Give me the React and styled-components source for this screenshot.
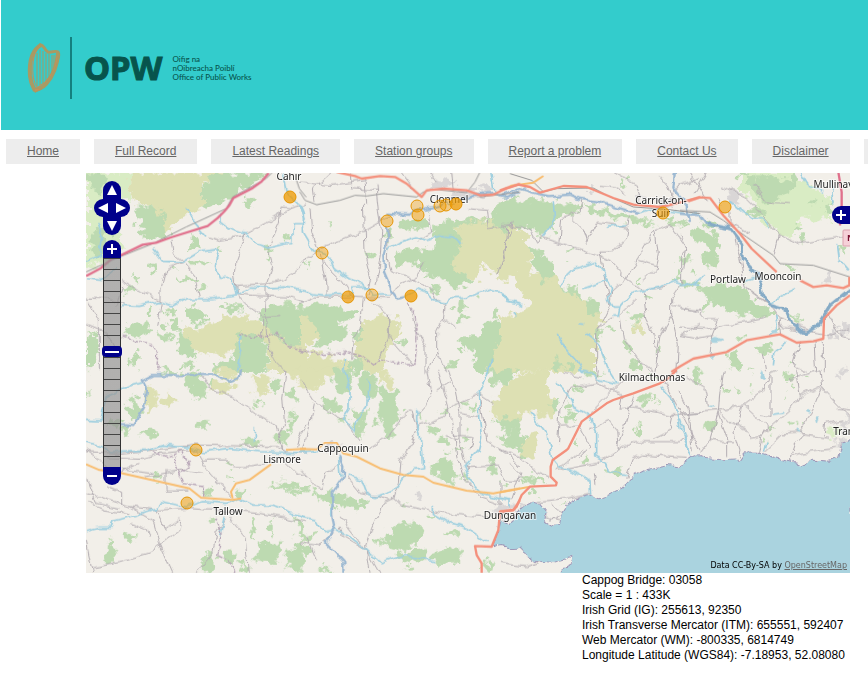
import React, { useState } from 'react';
import styled, { createGlobalStyle } from 'styled-components';

const COLORS = {
  BRAND: '#33cccc',
  BRAND_DARK: '#07544c',
  CONTROL: '#00008b',
  LAND: '#f2efe9',
  SEA: '#aad3df',
  WOOD: '#bddab1',
  HEATH: '#dde0b3',
  SCRUB: '#d9ecc4',
  TOWN: '#d9d6d6',
};

const NAV_ITEMS = [
  'Home',
  'Full Record',
  'Latest Readings',
  'Station groups',
  'Report a problem',
  'Contact Us',
  'Disclaimer',
  'FAQ',
];

const DETAILS = [
  'Cappog Bridge: 03058',
  'Scale = 1 : 433K',
  'Irish Grid (IG): 255613, 92350',
  'Irish Transverse Mercator (ITM): 655551, 592407',
  'Web Mercator (WM): -800335, 6814749',
  'Longitude Latitude (WGS84): -7.18953, 52.08080',
];

const PLACES = [
  { name: 'Cahir', x: 203, y: 7 },
  { name: 'Clonmel', x: 363, y: 30 },
  { name: 'Carrick-on-', x: 575, y: 31 },
  { name: 'Suir', x: 575, y: 44 },
  { name: 'Mullinavat', x: 752, y: 15 },
  { name: 'Portlaw', x: 642, y: 110 },
  { name: 'Mooncoin', x: 692, y: 107 },
  { name: 'Kilmacthomas', x: 566, y: 208 },
  { name: 'Tramore', x: 767, y: 262 },
  { name: 'Lismore', x: 196, y: 290 },
  { name: 'Cappoquin', x: 257, y: 279 },
  { name: 'Tallow', x: 142, y: 342 },
  { name: 'Dungarvan', x: 424, y: 346 },
];

// [x, y, opacity]
const STATIONS = [
  [204, 24, 0.75],
  [236, 80, 0.45],
  [301, 48, 0.45],
  [331, 33, 0.35],
  [332, 42, 0.5],
  [354, 33, 0.4],
  [360, 32, 0.45],
  [370, 31, 0.75],
  [262, 124, 0.7],
  [286, 122, 0.4],
  [325, 123, 0.75],
  [577, 40, 0.6],
  [639, 34, 0.6],
  [110, 277, 0.5],
  [101, 330, 0.5],
];

// Each sheet is drawn at three times the display scale. Areas are paths,
// `woods`, `lakes` and `towns` are small patches given as [x, y, rx, ry].
const SHEETS = [
  {
    x: 0,
    y: -3,
    scrub: 'M0,0 L130,0 L130,70 L100,160 L110,230 L60,270 L0,290z',
    heath:
      'M130,0 L415,0 L400,15 L345,35 L350,110 L290,130 L235,185 L200,100 L150,100 L130,60z M280,460 L340,470 L400,440 L460,430 L520,440 L530,460 L660,430 L660,600 L545,600 L545,510 L400,550 L330,540 L290,500z',
    wood:
      'M0,10 L40,5 L60,30 L40,60 L20,50z M20,180 L60,160 L80,230 L40,260 L10,220z M415,0 L545,0 L500,35 L440,75 L400,95 L350,110 L345,40z M155,105 L210,100 L235,150 L240,195 L190,205 L175,160 L145,150z M300,410 L330,400 L362,420 L365,450 L330,460 L300,440z M460,490 L540,490 L545,600 L380,600 L400,570 L440,560z M550,400 L590,395 L660,400 L660,510 L600,520 L560,480 L510,430z M270,470 L310,500 L330,560 L280,540z M0,490 L30,480 L40,540 L20,590 L0,590z M110,460 L150,450 L190,480 L150,500 L110,480z',
    woods: [
      [327, 215, 18, 22], [490, 88, 18, 14], [202, 290, 10, 20], [150, 318, 11, 9],
      [130, 352, 20, 10], [340, 270, 32, 8], [310, 322, 38, 7], [400, 235, 10, 6],
      [605, 195, 14, 8], [180, 182, 18, 12], [410, 405, 12, 10], [450, 410, 26, 10],
      [270, 455, 12, 20], [235, 495, 22, 10], [145, 560, 10, 22], [180, 468, 22, 14],
      [310, 580, 14, 12], [250, 420, 12, 8], [345, 350, 14, 6], [548, 240, 8, 14],
      [265, 290, 12, 4], [190, 415, 5, 14], [240, 460, 8, 9], [130, 580, 8, 12],
    ],
    stream:
      'M405,130 L405,150 L430,170 L478,185 L510,215 L545,228 L600,215 L620,215 L622,155 L650,155 M200,230 L230,268 L290,270 L340,240 L395,232 L385,280 L400,318 L440,320 L450,365 L500,345 L540,348 L590,345 L630,350 L660,360 M105,400 L160,403 L220,388 L260,402 L300,380 L380,380 L450,368 M300,110 L320,145 L360,190 M35,150 L50,190 L40,250 L0,270 M0,320 L50,325 L90,290 M590,0 L600,60 L640,100 L655,140 M460,485 L465,530 L452,600',
    rail:
      'M0,300 L100,255 L200,215 L300,165 L420,110 L440,75 L540,20 L560,0 M630,20 L640,50 L660,75',
    minor:
      'M370,195 L400,205 L470,195 L480,185 L545,150 L615,108 L660,95 M478,185 L450,260 L445,300 L452,365 M615,108 L585,105 L580,150 L545,228 L560,280 L540,340 L540,390 M255,200 L260,240 L290,265 L325,310 L340,375 M290,270 L240,290 L225,350 L225,400 L215,460 M105,325 L150,350 L225,385 M452,365 L500,370 L600,375 L660,390 M455,370 L480,400 L530,435 L580,430 M540,390 L545,500 L560,560 L600,600 M0,378 L60,380 L110,395 M10,390 L40,450 L40,600 M450,340 L540,335 L600,320 L640,290 L660,260 M530,440 L530,500 M110,340 L95,400 M0,455 L60,480 L100,560',
    border:
      'M460,485 L510,500 L570,480 L610,530 L660,535 M110,495 L200,520 L218,545 L215,600',
    motorway:
      'M0,312 L45,288 L75,262 L110,247 L170,218 L210,212 L255,196 L365,162 L395,138 L415,118 L430,100 L442,78 L500,48 L525,30 L548,3',
  },
  {
    x: 642,
    y: -3,
    heath:
      'M470,150 L540,145 L640,160 L660,170 L660,300 L600,320 L560,270 L530,325 L450,290 L450,260 L480,230z M0,430 L40,440 L60,500 L0,520z M190,440 L240,430 L305,440 L300,480 L260,540 L240,600 L160,600 L165,530z M0,550 L60,545 L150,570 L150,600 L0,600z M590,460 L660,430 L660,600 L560,600z',
    wood:
      'M320,140 L380,135 L390,160 L330,178 L300,155z M400,180 L430,150 L500,140 L560,150 L600,85 L660,85 L660,160 L520,150 L470,165 L490,210 L450,280 L530,330 L460,350 L430,320 L370,295 L350,270 L290,280 L285,255 L290,240 L360,230 L400,235z M0,400 L60,395 L165,420 L165,440 L120,450 L150,480 L80,530 L40,520 L60,500 L30,440 L0,430z M550,450 L590,440 L610,470 L560,600 L530,600 L520,540 L470,510 L480,490 L540,490z M150,560 L190,565 L200,600 L150,600z M560,140 L600,130 L660,160 L600,180z',
    woods: [
      [485, 405, 14, 16], [487, 440, 18, 12], [90, 162, 6, 6], [25, 275, 5, 10],
      [265, 190, 10, 8], [210, 250, 10, 8], [390, 310, 12, 8], [175, 490, 14, 22],
      [305, 510, 14, 10], [455, 410, 6, 5], [590, 425, 12, 10], [460, 580, 14, 8],
      [485, 525, 8, 14], [535, 370, 6, 6], [410, 350, 12, 8], [300, 150, 12, 8],
    ],
    towns: [[430, 35, 30, 14], [530, 65, 30, 12], [560, 45, 20, 10], [480, 70, 30, 14]],
    river:
      'M262,125 L330,128 L345,115 L400,105 L470,90 L520,70 L590,65 L620,75 L660,60 M258,160 L262,205 L250,250 L252,300 L265,330 L275,360 L290,380 L310,375',
    stream:
      'M0,95 L10,120 L10,180 L40,230 L85,250 L105,290 L150,320 L205,345 L215,370 L270,368 M0,355 L40,365 L75,370 L160,365 L155,345 L205,345 M262,232 L300,210 L350,195 L380,205 L420,190 L460,195 L480,215 M310,375 L350,350 L375,360 L400,385 L435,395 L450,380 L500,378 L570,350 L600,355 L625,390 L660,400 M575,560 L565,600 M130,600 L140,560 M575,0 L585,60',
    rail:
      'M0,60 L15,85 L50,98 L120,85 L165,70 L200,72 L250,65 L350,75 L370,60 L400,52 L500,62 L525,30 L540,0 M540,75 L660,60',
    minor:
      'M95,0 L40,50 L45,90 M150,0 L155,50 L230,55 M195,20 L200,95 M228,40 L235,120 L245,180 L240,260 L225,340 M0,270 L60,230 L185,180 L245,145 L270,135 M30,110 L35,180 L60,240 L78,340 L78,370 M70,270 L120,320 L160,375 M190,95 L195,240 L215,320 L200,370 M265,170 L262,260 L270,295 L360,330 L400,360 L410,385 L435,400 M0,395 L50,375 L150,375 L270,380 M190,380 L180,470 L160,500 L155,560 M220,390 L265,430 L265,500 L235,560 M435,400 L430,440 L410,480 L410,540 L385,600 M325,390 L350,480 L375,520 L375,600 M500,110 L560,115 L565,170 L640,160 M590,310 L600,280 L620,200 L640,150 M370,270 L350,310 L300,340 M385,130 L395,180 L350,210 M300,345 L270,370 M410,540 L440,600 M430,440 L470,465 M300,0 L340,50 M410,30 L390,0 M455,0 L460,60 M265,430 L270,500 L340,580 M0,30 L90,40 L200,25',
    border:
      'M0,535 L60,545 L130,540 L180,550 L225,585 L240,560 L300,575 L345,580 L352,480 L345,430 L325,395',
    primary:
      'M110,0 L165,12 L185,20 L240,12 L285,15 L320,35 L365,75 L380,55 L430,50 L500,55 L540,70 L580,68 L620,48 L660,35',
  },
  {
    x: 1242,
    y: -3,
    heath:
      'M0,200 L20,165 L75,185 L90,240 L95,300 L160,320 L180,345 L270,390 L310,440 L285,500 L285,600 L0,600 L0,440 L95,405 L60,360 L45,300 L0,330z',
    wood:
      'M0,100 L40,80 L160,85 L240,100 L240,120 L175,140 L160,170 L130,195 L90,165 L0,155z M85,230 L120,235 L165,280 L165,320 L130,330 L105,290z M245,90 L320,115 L380,130 L470,150 L420,160 L370,145 L290,130z M175,345 L230,345 L245,380z M255,380 L290,390 L300,430 L270,430z M500,140 L570,150 L560,160 L500,155z',
    woods: [
      [585, 180, 16, 14], [553, 262, 16, 8], [580, 297, 10, 8], [410, 438, 28, 13],
      [388, 523, 11, 12], [332, 465, 12, 6], [300, 485, 12, 14], [405, 585, 12, 14],
      [450, 378, 12, 6], [205, 238, 9, 5], [415, 322, 5, 12], [175, 575, 14, 16],
      [480, 535, 6, 5], [205, 585, 12, 9], [535, 315, 12, 8], [585, 340, 22, 8],
      [370, 30, 6, 7], [310, 560, 5, 5], [200, 265, 5, 3], [490, 135, 14, 8],
    ],
    heaths: [[418, 472, 14, 20]],
    towns: [[268, 60, 10, 8], [500, 95, 20, 14], [420, 80, 14, 10]],
    river:
      'M0,68 L60,50 L110,65 L150,72 L210,68 L240,80 L300,90 L380,115 L420,125 M525,0 L520,50 L560,100 L570,150',
    stream:
      'M420,125 L460,110 L560,125 L600,125 M175,345 L195,320 L225,290 L285,270 L310,300 L320,325 L250,350 M320,320 L335,350 L325,380 L340,405 L360,405 L395,365 L430,355 L480,345 L525,328 L550,335 L600,340 M360,405 L355,432 L340,432 M175,485 L190,520 L235,570 L250,600 M255,485 L295,515 L310,550 L328,600 M0,360 L20,390 L70,402 M160,90 L165,150 L130,195 M235,458 L250,460 M35,420 L50,435 M320,165 L380,158',
    rail:
      'M30,5 L95,25 L130,60 L170,50 L280,48 L330,75 L400,105 L500,112 L600,125',
    minor:
      'M0,160 L90,170 L110,210 L125,195 L330,265 L380,320 L430,355 M20,165 L15,250 L0,275 M430,355 L500,345 M465,175 L400,280 L380,320 L335,360 L330,400 L290,480 L290,600 M465,175 L510,160 L560,230 L545,260 L545,335 L515,380 L515,430 L480,490 L465,600 M245,85 L240,120 L185,140 L180,210 M215,135 L250,170 L265,215 M260,215 L295,150 L385,165 L380,195 L340,240 L300,240 L310,300 L330,400 M430,360 L440,440 L465,490 L470,560 M410,380 L360,430 L370,500 L420,570 L460,600 M465,180 L475,240 L465,295 L430,330 M415,265 L465,280 M340,0 L410,40 L420,70 M475,10 L500,40 L520,90 M520,400 L600,420 M540,490 L600,460 M515,430 L535,520 L530,600 M290,470 L340,440 M600,20 L540,40 L500,90 M380,160 L385,130 M380,70 L345,45 L300,40',
    primary:
      'M0,55 L55,38 L90,45 L120,62 L190,42 L260,45 L340,78 L400,98 L480,105 L540,92 L600,75',
    secondary: 'M30,42 L100,32 L130,12',
  },
  {
    x: 1782,
    y: -3,
    scrub:
      'M180,0 L330,0 L400,50 L450,80 L450,150 L370,130 L330,200 L230,140 L230,90 L180,60z',
    wood:
      'M30,180 L50,165 L100,180 L120,210 L110,270 L80,290 L60,250 L85,240 L70,210 L40,210z M55,350 L100,335 L190,340 L220,390 L280,415 L270,440 L150,420 L80,370z M200,20 L240,10 L350,30 L330,60 L260,95 L220,60z',
    woods: [
      [370, 195, 13, 13], [232, 120, 28, 12], [355, 165, 12, 8], [160, 560, 18, 24],
      [250, 530, 22, 14], [325, 285, 16, 8], [95, 385, 18, 10], [190, 10, 14, 10],
      [400, 90, 18, 8], [75, 405, 8, 12], [350, 440, 18, 6], [490, 230, 10, 12],
      [180, 585, 10, 8], [90, 155, 20, 9], [20, 338, 16, 8], [345, 20, 14, 12],
      [440, 110, 10, 14], [335, 575, 5, 7], [180, 495, 14, 8], [285, 470, 8, 5],
    ],
    towns: [[160, 76, 22, 18], [445, 318, 11, 16], [497, 470, 18, 20], [460, 490, 14, 10]],
    lakes: [[108, 503, 16, 7], [95, 556, 9, 8], [285, 478, 12, 5]],
    estuary:
      'M80,155 L150,170 L185,215 L190,265 L235,310 L250,370 L270,400 L320,415 L340,460 L375,485 L410,465 L450,400 L510,352',
    river: 'M0,125 L60,130 L80,155 L150,172',
    stream:
      'M150,85 L180,110 L215,140 L250,140 L270,165 M360,0 L385,40 L430,60 M455,20 L462,100 M470,220 L475,260 L510,300 M0,340 L40,340 L75,310 M265,400 L290,380 L345,350 M290,430 L295,470 L270,490 M280,580 L285,540 L320,510 M200,325 L235,310',
    rail: 'M0,115 L90,120 L130,145 L200,195 L280,250 L300,275 L400,280 L510,315',
    minor:
      'M25,0 L60,50 L80,90 M45,60 L80,0 M130,45 L200,80 L240,120 L295,185 L280,250 M295,185 L360,215 L510,190 M0,190 L20,230 L10,300 M160,180 L180,260 L195,345 L260,390 M0,410 L60,415 L80,440 L115,440 M300,440 L400,480 M115,440 L95,490 L90,550 M0,465 L80,470 L260,435 M400,480 L460,490 L510,470 M200,350 L270,400 L300,440 L305,490 M430,500 L430,600 M360,510 L340,580 L380,600 M250,540 L260,600 M440,420 L480,490 L510,500 M300,465 L400,480 M405,510 L410,600 M0,490 L50,500 L100,490 M120,100 L110,80 M220,40 L260,90 L330,95 M150,120 L150,150 L210,185',
    motorway: 'M475,0 L485,60 L485,100 L480,160',
    primary:
      'M25,88 L60,76 L90,78 L130,130 L180,185 L215,230 L290,300 M360,325 L400,345 L440,340 L490,348 L508,340 L508,315 M-26,600 L0,583 L40,560 L140,540 L200,505 L300,487 L350,512 L400,508 L430,500 L432,440 L470,400 L510,370',
  },
  {
    x: 0,
    y: 591,
    heath:
      'M180,60 L205,50 L215,110 L190,130 L175,100z M225,90 L250,60 L265,90 L250,120z M375,35 L450,40 L430,65 L370,60z M505,10 L555,20 L545,80 L505,70z M600,0 L660,0 L660,60z M395,0 L465,0 L450,30 L400,20z',
    wood:
      'M130,90 L155,80 L165,130 L145,155 L128,130z M105,170 L130,165 L130,195 L105,195z M560,30 L580,20 L590,60 L560,70z M285,20 L340,0 L365,80 L330,85z M495,450 L510,450 L505,510 L495,500z M520,520 L590,520 L570,580 L510,570z M600,540 L640,530 L660,570 L650,609 L600,590z M610,130 L630,120 L625,160 L605,190z',
    woods: [
      [190, 190, 22, 12], [350, 165, 20, 13], [498, 215, 24, 12], [617, 70, 14, 18],
      [368, 365, 18, 14], [600, 347, 44, 10], [630, 368, 20, 8], [460, 368, 20, 9],
      [588, 205, 18, 20], [640, 470, 12, 20], [368, 582, 20, 28], [430, 560, 26, 16],
      [130, 500, 20, 9], [210, 322, 10, 8], [300, 25, 16, 9], [320, 45, 16, 7],
      [380, 450, 10, 12], [555, 475, 5, 24], [75, 545, 12, 34], [250, 5, 25, 8],
      [470, 595, 16, 12], [8, 75, 8, 10], [510, 100, 12, 8], [435, 285, 8, 5],
      [650, 525, 8, 16], [440, 328, 8, 4], [380, 35, 10, 6], [80, 155, 22, 14],
    ],
    river:
      'M105,165 L145,168 L175,110 L180,50 L170,30 L200,15 L380,15 L430,35 L460,25 L465,0',
    stream:
      'M0,148 L45,150 L60,80 L110,55 L170,38 M0,215 L50,230 L70,245 L180,240 L230,225 L310,235 L350,245 L430,235 L520,245 L660,248 M0,485 L40,475 L75,475 L80,455 L130,440 L215,415 L225,395 L300,410 L350,395 L420,400 L460,385 L500,405 L560,405 L620,430 L660,440 M505,170 L505,215 M415,440 L400,500',
    minor:
      'M0,245 L100,250 L200,240 L330,225 L575,230 L600,245 L660,250 M60,260 L170,265 L220,250 L330,240 M330,240 L365,300 L435,380 M350,270 L420,270 L440,290 L500,290 L560,280 M0,370 L50,385 L130,410 L220,420 L300,415 L400,422 L520,430 L660,455 M350,20 L380,60 L440,80 L510,130 L570,165 L590,240 M600,0 L590,80 L595,160 L580,190 L590,240 M100,310 L160,280 M240,300 L240,360 L310,360 M130,410 L200,450 L220,520 L260,609 M210,420 L240,480 L280,450 M100,575 L200,545 L240,510 L280,480 L285,445 M0,510 L20,609 M420,445 L390,490 L380,550 L330,609 M430,440 L480,500 L490,609 M660,160 L640,200 L635,235 M0,320 L30,400 L100,415 M60,350 L110,370 L110,410 M180,320 L290,300 L350,310 M110,300 L200,310 M600,280 L630,310 L660,320 M10,400 L50,420 L130,430 M100,575 L20,590 M130,460 L180,480 L190,500 M0,240 L40,270 L60,300',
    border:
      'M200,245 L240,260 L290,245 L310,290 L285,310 L265,290 L270,255 M280,310 L290,340 L350,350 L350,380 M385,440 L405,490 L395,560 L430,575 L450,609',
    secondary:
      'M0,283 L40,300 L100,308 L220,335 L310,355 L345,383 L440,390 L465,385 M440,385 L435,365 L450,340 L490,330 L555,283 M600,240 L660,236',
  },
  {
    x: 642,
    y: 591,
    heath:
      'M0,0 L110,0 L60,40 L50,70 L0,40z M240,0 L260,0 L290,60 L250,40z M570,110 L620,50 L660,20 L660,165 L580,135z',
    wood:
      'M240,50 L290,70 L300,130 L270,210 L230,160 L240,110z M170,20 L215,5 L240,50 L210,90 L180,60z M65,90 L110,80 L120,120 L80,130z M40,370 L90,365 L200,395 L190,415 L110,410 L60,390z M390,280 L440,260 L480,310 L450,340 L400,310z M260,490 L310,455 L370,470 L350,530 L290,545 L250,520z M290,550 L380,540 L370,570 L300,580z M390,560 L430,540 L480,535 L480,580 L400,580z M565,0 L640,0 L620,50 L580,40z M580,140 L660,150 L660,190 L600,180z M160,120 L200,120 L190,200 L170,210z M95,0 L160,0 L150,70 L110,60z',
    woods: [
      [400, 180, 16, 14], [430, 210, 10, 10], [445, 243, 14, 8], [20, 500, 26, 12],
      [15, 540, 20, 10], [580, 290, 12, 24], [607, 205, 14, 10], [12, 355, 18, 8],
      [500, 200, 10, 10], [365, 140, 7, 12], [480, 240, 12, 6], [240, 510, 14, 8],
      [460, 485, 18, 10], [570, 580, 14, 16], [310, 410, 6, 10], [390, 440, 8, 6],
      [640, 215, 14, 20], [520, 110, 8, 8], [130, 150, 12, 8], [75, 600, 16, 6],
      [430, 125, 8, 7], [490, 100, 12, 6], [330, 590, 10, 6], [495, 325, 10, 8],
    ],
    towns: [[360, 377, 11, 10], [605, 425, 22, 20], [100, 235, 20, 10]],
    river:
      'M115,255 L130,290 L128,320 L95,370 L100,440 L105,470 L80,520 L130,575 L130,609',
    stream:
      'M135,0 L150,60 L150,120 L130,150 L165,185 L170,150 L200,110 L205,30 M140,315 L185,330 L200,370 L220,382 L290,355 L310,330 L340,295 L368,290 L360,190 L350,165 L350,120 M0,440 L50,450 L70,485 L105,480 L150,500 L200,540 L240,578 L290,560 L340,560 L400,575 M400,405 L400,430 L450,460 L500,475 L560,515 M565,0 L535,60 L540,160 L545,200 L535,240 L490,290 L510,330 L545,370 L630,390 M0,245 L60,240 M115,255 L120,320 M98,370 L95,440',
    minor:
      'M0,30 L40,90 L130,150 L180,215 M40,100 L30,150 L10,240 M380,0 L395,80 L350,130 L350,180 L335,220 L300,270 L295,340 L280,390 L250,400 L215,480 L200,530 L210,609 M410,0 L430,60 L445,110 L465,200 L470,260 L490,320 L540,380 L600,400 M445,0 L465,60 L480,130 L480,210 L500,300 M210,235 L260,200 L310,140 L335,120 L350,175 M350,170 L430,140 L460,105 L535,70 L580,100 M480,130 L540,140 M535,60 L560,210 L620,250 L660,290 M280,385 L300,405 L430,430 L560,440 M68,362 L60,360 L0,300 M68,362 L80,310 L120,280 M120,440 L200,540 L240,609 M140,320 L180,370 L270,390 M490,290 L590,285 L620,330 L660,330 M600,330 L600,400 M460,195 L520,200 L510,240 M410,60 L450,35 M120,470 L130,500 L200,540 M20,500 L50,570 M480,210 L440,200 M100,490 L60,530 L0,520',
    primary:
      'M660,390 L640,420 L600,425 L595,480 L575,530 L525,528 L530,555 L545,580 L545,609',
    secondary:
      'M0,237 L50,238 L75,218 L110,218 L130,250 L170,260 L240,295 L310,315 L370,320 L400,338 L500,362 L580,370 L660,355',
    coast:
      'M600,458 L612,455 L625,470 L640,465 L655,450 L662,470 L662,530 L630,530 L610,525 L575,532 L590,500z',
  },
  {
    x: 1242,
    y: 591,
    heath:
      'M0,50 L60,10 L150,0 L140,60 L170,110 L160,150 L90,125 L0,130z M85,190 L120,180 L110,230 L90,270 L55,250z',
    wood:
      'M0,0 L50,0 L20,30 L0,40z M15,190 L60,180 L80,210 L60,240 L20,230z M60,320 L130,318 L135,340 L70,335z M185,140 L230,120 L230,150 L200,155z',
    woods: [
      [20, 165, 20, 20], [15, 345, 14, 5], [225, 220, 9, 12], [260, 270, 9, 12],
      [430, 95, 10, 20], [415, 175, 8, 14], [590, 20, 10, 20], [100, 368, 12, 10],
      [440, 80, 20, 6], [275, 10, 30, 8], [185, 400, 12, 5], [165, 110, 10, 20],
      [205, 110, 10, 14], [235, 60, 12, 6], [60, 210, 14, 10], [345, 305, 24, 8],
      [10, 20, 22, 18], [460, 20, 12, 5], [70, 260, 8, 8], [465, 90, 6, 5],
    ],
    towns: [[20, 412, 22, 14], [75, 408, 16, 8]],
    stream:
      'M90,125 L140,190 L155,260 L180,290 L240,315 L270,335 L272,375 M170,40 L210,80 L220,110 L270,140 L290,190 L290,260 L320,280 L325,305 L380,310 M485,50 L520,90 L540,170 L575,255 M240,0 L270,10 L300,30 L350,40 M330,0 L355,40 M0,385 L30,390 L30,415',
    minor:
      'M0,235 L60,265 L100,300 L150,320 M295,0 L290,40 L210,55 L180,120 L172,230 M180,168 L240,165 M245,20 L190,10 M270,130 L380,20 M365,80 L360,120 L400,115 L515,135 L600,125 M400,80 L370,180 L350,235 M325,150 L350,180 L355,240 L290,280 L180,300 M355,240 L400,215 L540,215 L560,190 M520,130 L510,180 L460,205 M380,320 L400,270 L430,255 L560,265 M170,300 L250,240 M240,170 L270,230 L240,260 M285,345 L280,310 M110,395 L200,385 L270,370 M30,280 L60,310 L35,390 M0,580 L80,590 L120,575 M150,400 L190,430 L150,450 M490,30 L540,120 L600,240 M325,150 L270,180 M290,40 L370,80 M140,440 L180,450',
    primary:
      'M530,0 L505,25 L480,40 L400,70 L340,90 L320,100 L245,155 L225,195 L205,235 L200,240 L158,270 L152,290 L152,320 L170,338 L168,346 L90,350 L65,375 L50,410 L40,420 L0,425',
    secondary: 'M0,367 L90,350',
    coast:
      'M602,262 L575,265 L545,290 L500,285 L440,300 L390,325 L365,355 L330,375 L295,388 L265,375 L230,385 L200,405 L185,430 L180,472 L150,465 L135,455 L140,430 L115,400 L100,395 L70,410 L50,440 L25,462 L0,450 L0,520 L30,532 L60,525 L75,555 L100,572 L160,575 L215,560 L210,585 L185,600 L160,620 L602,620z',
  },
  {
    x: 1782,
    y: 591,
    woods: [
      [90, 168, 18, 19], [50, 15, 18, 20], [142, 65, 8, 11], [175, 55, 7, 6],
      [325, 20, 14, 16], [335, 160, 9, 7], [210, 58, 6, 4], [275, 180, 5, 5],
      [258, 210, 6, 12], [330, 50, 10, 6], [385, 20, 4, 4], [315, 85, 5, 4],
      [370, 160, 7, 5], [210, 5, 8, 3],
    ],
    greens: [[455, 185, 16, 16]],
    towns: [[495, 165, 18, 24], [480, 215, 14, 18], [490, 5, 20, 10]],
    lakes: [[245, 18, 6, 13], [410, 148, 5, 10], [385, 125, 6, 5], [95, 110, 8, 3]],
    stream: 'M0,150 L15,190 L30,245 M250,245 L258,215 M275,130 L310,125 M350,175 L360,180',
    minor:
      'M0,130 L110,122 L190,105 L250,60 L270,10 L290,0 M115,122 L150,160 L200,180 L210,200 M190,105 L260,170 L245,200 L235,250 M20,20 L80,60 L85,110 M130,0 L120,60 L115,125 L90,210 L60,250 M0,65 L25,120 L40,240 M185,110 L165,190 L180,240 L175,262 M210,205 L240,200 L260,180 L330,120 L360,80 M250,250 L320,182 L360,180 L370,195 L450,205 M270,20 L270,140 L240,135 M350,0 L360,80 M420,0 L425,50 L470,100 L510,140 M360,80 L425,50 M425,55 L400,120 L360,180 M335,275 L335,255 L430,240 L470,235 M335,250 L345,220 L370,195 M90,210 L130,215 L165,215 M435,200 L440,160 L490,150 M115,130 L140,200 L140,255 M420,0 L330,30 M470,115 L510,120',
    coast:
      'M-4,290 L10,280 L40,262 L130,268 L165,265 L175,278 L195,250 L240,252 L300,270 L370,285 L400,272 L450,275 L480,262 L490,225 L514,205 L514,620 L-4,620z',
  },
];

// Irregular closed outline around a centre point.
const patch = ([cx, cy, rx, ry]) => {
  const steps = 11;
  const points = Array.from({ length: steps }, (_, i) => {
    const angle = (i / steps) * Math.PI * 2;
    const wobble = 0.75 + 0.45 * Math.abs(Math.sin(cx * 1.7 + cy * 0.9 + i * 2.3));
    const x = Math.round(cx + Math.cos(angle) * rx * wobble);
    const y = Math.round(cy + Math.sin(angle) * ry * wobble);
    return `${x},${y}`;
  });
  return `M${points.join(' L')}z`;
};

const patches = (list = []) => list.map(patch).join(' ');

const GlobalStyle = createGlobalStyle`
  body {
    margin: 0;
    background: white;
    color: black;
    font-family: 'Liberation Sans', Arial, sans-serif;
    font-size: 12px;
    overflow-x: hidden;
  }
`;

const Header = styled.header`
  display: flex;
  align-items: center;
  height: 130px;
  margin-left: 1px;
  padding: 0 25px;
  box-sizing: border-box;
  background: ${COLORS.BRAND};
  color: ${COLORS.BRAND_DARK};
`;

const Brand = styled.a`
  display: flex;
  align-items: center;
  padding-top: 6px;
  color: inherit;
  text-decoration: none;
`;

const Emblem = styled.svg`
  display: block;
  width: 36px;
  height: 52px;
`;

const BrandName = styled.strong`
  margin-left: 8px;
  padding-left: 12px;
  border-left: 2px solid #14807f;
  font-family: 'Noto Sans', 'Open Sans', sans-serif;
  font-size: 33px;
  font-weight: 700;
  line-height: 62px;
  -webkit-text-stroke: 1px ${COLORS.BRAND_DARK};
`;

const BrandCaption = styled.span`
  margin-left: 10px;
  font-family: Lato, sans-serif;
  font-size: 8px;
  font-weight: 500;
  line-height: 9px;
  white-space: pre-line;
`;

const Nav = styled.nav`
  display: flex;
  gap: 14px;
  padding: 9px 0 9px 6px;
  overflow: hidden;
`;

const NavLink = styled.a`
  flex: none;
  padding: 0 21px;
  background: #ededed;
  color: #666;
  line-height: 25px;
`;

const Content = styled.main`
  margin: 0 18px 0 86px;
`;

const Map = styled.section`
  position: relative;
  height: 400px;
  overflow: hidden;
  background: ${COLORS.LAND};
`;

const Canvas = styled.svg`
  display: block;
  width: 100%;
  height: 100%;
`;

const Area = styled.path`
  fill: ${({ $color }) => $color};
`;

const Line = styled.path`
  fill: none;
  stroke: ${({ $color }) => $color};
  stroke-width: ${({ $width }) => $width};
  stroke-dasharray: ${({ $dash }) => $dash || 'none'};
  stroke-linejoin: round;
`;

const Place = styled.text`
  fill: #222;
  stroke: rgba(255, 255, 255, 0.6);
  stroke-width: 2px;
  paint-order: stroke;
  font-family: 'Noto Sans', sans-serif;
  font-size: 10px;
  text-anchor: middle;
`;

const Station = styled.circle`
  fill: #ee9900;
  stroke: #e59400;
`;

const Controls = styled.div`
  position: absolute;
  top: 8px;
  left: 8px;
  display: flex;
  flex-direction: column;
  align-items: center;
  width: 36px;
`;

const PanPad = styled.div`
  display: grid;
  grid-template: repeat(3, 18px) / repeat(4, 9px);
  margin-bottom: 5px;
`;

const PanButton = styled.button`
  display: flex;
  align-items: center;
  justify-content: center;
  grid-area: ${({ $area }) => $area};
  padding: 0;
  border: 0;
  border-radius: ${({ $radius }) => $radius};
  background: ${COLORS.CONTROL};
`;

const ZoomButton = styled.button`
  display: flex;
  align-items: center;
  justify-content: center;
  width: 18px;
  height: 18px;
  padding: 0;
  border: 0;
  border-radius: ${({ $radius }) => $radius};
  background: ${COLORS.CONTROL};
`;

const ExpandButton = styled(ZoomButton)`
  position: absolute;
  top: 33px;
  right: 0;
`;

const ZoomSlider = styled.input`
  appearance: none;
  writing-mode: vertical-lr;
  direction: rtl;
  width: 20px;
  height: 209px;
  margin: 0;
  background:
    linear-gradient(90deg, #333 1px, transparent 1px 17px, #333 17px) center / 18px 100% no-repeat,
    repeating-linear-gradient(#444 0 1px, rgba(150, 150, 150, 0.7) 1px 11px) center / 18px 100% no-repeat;

  &::-webkit-slider-thumb {
    appearance: none;
    width: 20px;
    height: 11px;
    border-radius: 4px;
    background:
      linear-gradient(white, white) center / 14px 2px no-repeat,
      ${COLORS.CONTROL};
  }
`;

const Attribution = styled.small`
  position: absolute;
  right: 3px;
  bottom: 2px;
  font-family: 'DejaVu Sans', Verdana, sans-serif;
  font-size: 8px;
  line-height: 10px;

  a {
    color: #666;
  }
`;

const Details = styled.div`
  width: fit-content;
  min-width: 268px;
  margin-left: auto;
  line-height: 15px;
`;

const Glyph = ({ d }) => (
  <svg width="18" height="18" viewBox="0 0 18 18" aria-hidden="true">
    <path d={d} fill="white" />
  </svg>
);

const PLUS = 'M8,4h2v4h4v2h-4v4h-2v-4h-4v-2h4z';
const MINUS = 'M4,8h10v2h-10z';

const Harp = () => (
  <Emblem viewBox="0 0 36 52" fill="none" stroke="#a99a62" aria-hidden="true">
    <path d="M15,3 C6,8 3,20 4,34 C5,43 8,46 9,49" strokeWidth="4" />
    <path d="M15,3 C8,9 6,20 7,33 C8,39 9,42 11,45" stroke="#c78f58" strokeWidth="1" />
    <path d="M14,3 C18,2 18,8 22,10 C26,11 29,8 32,10 C34,13 32,17 31,20" strokeWidth="3" />
    <path d="M32,11 C31,24 28,33 20,42 C17,46 13,46 8,49" strokeWidth="4" />
    <path d="M31,14 C30,26 26,33 19,40 L9,47" stroke="#c78f58" strokeWidth="1" />
    <path d="M11,11V44 M14,8V43 M17,9V42 M20,11V39 M23,12V36 M26,13V32 M28,13V28" />
    <path d="M8,46 L16,47 L9,50z M14,1l1,4" fill="#c78f58" />
  </Emblem>
);

const Layer = ({ children, ...rest }) => (
  <g {...rest}>
    {SHEETS.map((sheet) => (
      <g key={`${sheet.x}-${sheet.y}`} transform={`translate(${sheet.x} ${sheet.y})`}>
        {children(sheet)}
      </g>
    ))}
  </g>
);

const Terrain = () => (
  <g transform="scale(0.33333)">
    <Layer filter="url(#ragged)">
      {(s) => (
        <>
          <Area $color={COLORS.SCRUB} d={`${s.scrub || ''} ${patches(s.greens)}`} />
          <Area $color={COLORS.TOWN} d={patches(s.towns)} />
          <Area $color={COLORS.HEATH} d={`${s.heath || ''} ${patches(s.heaths)}`} />
          <Area $color={COLORS.WOOD} d={`${s.wood || ''} ${patches(s.woods)}`} />
        </>
      )}
    </Layer>
    <Layer filter="url(#winding)">
      {(s) => (
        <>
          <Line $color="#b3adb2" $width={3} d={s.minor} />
          <Line $color="#9fcfdf" $width={5} d={s.stream} />
          <Line $color="#9db9d2" $width={7} d={s.river} />
          <Line $color="#86abc6" $width={10} d={s.estuary} />
          <Line $color="#b5a3b5" $width={4} $dash="12 4" d={s.border} />
          <Area $color={COLORS.SEA} d={patches(s.lakes)} />
        </>
      )}
    </Layer>
    <g filter="url(#winding)">
      <Layer>{(s) => <Line $color="#9f98b8" $width={6} $dash="16 4" d={s.coast} />}</Layer>
      <Layer>{(s) => <Area $color={COLORS.SEA} d={s.coast} />}</Layer>
    </g>
    <Layer>
      {(s) => (
        <>
          <Line $color="#999" $width={3} d={s.rail} />
          <Line $color="#f8bd70" $width={6} d={s.secondary} />
          <Line $color="#f4907c" $width={7} d={s.primary} />
          <Line $color="#e0708c" $width={7} d={s.motorway} />
        </>
      )}
    </Layer>
  </g>
);

const MapView = () => {
  const [zoom, setZoom] = useState(10);

  return (
    <Map aria-label="Station map">
      <Canvas viewBox="0 0 764 400" preserveAspectRatio="xMidYMid slice">
        <defs>
          <filter id="ragged" x="0" y="0" width="100%" height="100%">
            <feTurbulence type="fractalNoise" baseFrequency="0.04" numOctaves="3" seed="4" />
            <feDisplacementMap in="SourceGraphic" scale="50" xChannelSelector="R" yChannelSelector="G" />
          </filter>
          <filter id="winding" x="0" y="0" width="100%" height="100%">
            <feTurbulence type="fractalNoise" baseFrequency="0.03" numOctaves="2" seed="9" />
            <feDisplacementMap in="SourceGraphic" scale="24" xChannelSelector="R" yChannelSelector="G" />
          </filter>
        </defs>
        <Terrain />
        <rect x="757" y="57" width="16" height="16" rx="1" fill="#f6d0d8" stroke="#dba0ad" />
        <text x="761" y="68" fontFamily="Noto Sans" fontSize="9" fontWeight="700" fill="#7a1030">
          N25
        </text>
        {PLACES.map(({ name, x, y }) => (
          <Place key={name} x={x} y={y}>
            {name}
          </Place>
        ))}
        {STATIONS.map(([x, y, opacity]) => (
          <Station key={`${x}-${y}`} cx={x} cy={y} r="6" fillOpacity={opacity} />
        ))}
      </Canvas>
      <Controls>
        <PanPad>
          <PanButton $area="1 / 2 / 2 / 4" $radius="9px 9px 0 0" aria-label="Pan up">
            <Glyph d="M9,4 L14,14 H4z" />
          </PanButton>
          <PanButton $area="2 / 1 / 3 / 3" $radius="9px 0 0 9px" aria-label="Pan left">
            <Glyph d="M4,9 L14,4 V14z" />
          </PanButton>
          <PanButton $area="2 / 3 / 3 / 5" $radius="0 9px 9px 0" aria-label="Pan right">
            <Glyph d="M14,9 L4,4 V14z" />
          </PanButton>
          <PanButton $area="3 / 2 / 4 / 4" $radius="0 0 9px 9px" aria-label="Pan down">
            <Glyph d="M9,14 L4,4 H14z" />
          </PanButton>
        </PanPad>
        <ZoomButton
          $radius="9px 9px 0 0"
          aria-label="Zoom in"
          onClick={() => setZoom(Math.min(18, zoom + 1))}
        >
          <Glyph d={PLUS} />
        </ZoomButton>
        <ZoomSlider
          type="range"
          min="0"
          max="18"
          value={zoom}
          aria-label="Zoom level"
          onChange={(e) => setZoom(Number(e.target.value))}
        />
        <ZoomButton
          $radius="0 0 9px 9px"
          aria-label="Zoom out"
          onClick={() => setZoom(Math.max(0, zoom - 1))}
        >
          <Glyph d={MINUS} />
        </ZoomButton>
      </Controls>
      <ExpandButton $radius="9px 0 0 9px" aria-label="Show layers">
        <Glyph d={PLUS} />
      </ExpandButton>
      <Attribution>
        Data CC-By-SA by <a href="#osm">OpenStreetMap</a>
      </Attribution>
    </Map>
  );
};

const App = () => (
  <>
    <GlobalStyle />
    <Header>
      <Brand href="#home">
        <Harp />
        <BrandName>OPW</BrandName>
        <BrandCaption lang="ga">
          {'Oifig na\nnOibreacha Poiblí\nOffice of Public Works'}
        </BrandCaption>
      </Brand>
    </Header>
    <Nav>
      {NAV_ITEMS.map((item) => (
        <NavLink key={item} href={`#${item.toLowerCase().replace(/ /g, '-')}`}>
          {item}
        </NavLink>
      ))}
    </Nav>
    <Content>
      <MapView />
      <Details>
        {DETAILS.map((line) => (
          <div key={line}>{line}</div>
        ))}
      </Details>
    </Content>
  </>
);

export default App;
